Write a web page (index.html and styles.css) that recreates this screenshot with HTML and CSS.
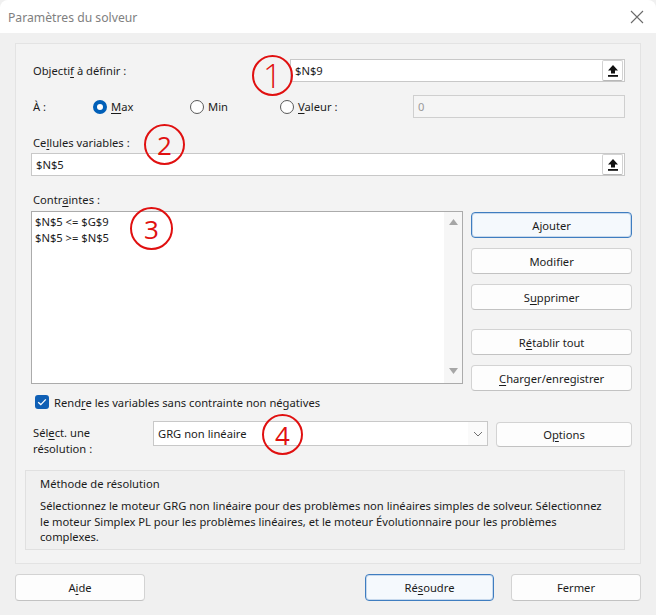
FILE: index.html
```html
<!DOCTYPE html>
<html lang="fr">
<head>
<meta charset="utf-8">
<title>Paramètres du solveur</title>
<link rel="stylesheet" href="styles.css">
</head>
<body>
<div class="window">
  <div class="titlebar">
    <span class="title">Paramètres du solveur</span>
    <svg class="close" width="14" height="14" viewBox="0 0 14 14"><path d="M1 1L13 13M13 1L1 13" stroke="#6b6b6b" stroke-width="1.1" fill="none"/></svg>
  </div>

  <div class="panel">
    <div class="row row-obj">
      <span class="lbl">Objecti<u>f</u> à définir :</span>
      <div class="field field-obj">
        <span class="val">$N$9</span>
        <span class="ref-btn"><svg width="12" height="13" viewBox="0 0 12 13"><path d="M6 1L11 6.5H8V9.5H4V6.5H1Z" fill="#111"/><rect x="1" y="11" width="10" height="1.8" fill="#111"/></svg></span>
      </div>
    </div>

    <div class="row row-radio">
      <span class="lbl lbl-a">À :</span>
      <span class="radio-grp g-max"><span class="radio on"></span><span><u>M</u>ax</span></span>
      <span class="radio-grp g-min"><span class="radio"></span><span>Min</span></span>
      <span class="radio-grp g-val"><span class="radio"></span><span><u>V</u>aleur :</span></span>
      <div class="field field-zero"><span class="val dis">0</span></div>
    </div>

    <div class="lbl lbl-block lbl-cells">Ce<u>l</u>lules variables :</div>
    <div class="field field-cells">
      <span class="val">$N$5</span>
      <span class="ref-btn"><svg width="12" height="13" viewBox="0 0 12 13"><path d="M6 1L11 6.5H8V9.5H4V6.5H1Z" fill="#111"/><rect x="1" y="11" width="10" height="1.8" fill="#111"/></svg></span>
    </div>

    <div class="lbl lbl-block lbl-cons">Contr<u>a</u>intes :</div>
    <div class="cons">
      <div class="listbox">
        <div class="items">
          <div class="item">$N$5 &lt;= $G$9</div>
          <div class="item">$N$5 &gt;= $N$5</div>
        </div>
        <div class="scroll">
          <svg width="9" height="6" viewBox="0 0 9 6"><path d="M4.5 0L9 6H0Z" fill="#a6a6a6"/></svg>
          <svg width="9" height="6" viewBox="0 0 9 6"><path d="M0 0H9L4.5 6Z" fill="#a6a6a6"/></svg>
        </div>
      </div>
      <div class="btn-col">
        <button class="btn default">Ajouter</button>
        <button class="btn">Modifier</button>
        <button class="btn">S<u>u</u>pprimer</button>
        <button class="btn gap">R<u>é</u>tablir tout</button>
        <button class="btn"><u>C</u>harger/enregistrer</button>
      </div>
    </div>

    <div class="check-row">
      <span class="checkbox"><svg width="10" height="8" viewBox="0 0 10 8"><path d="M1.2 4.2L3.8 6.6L8.8 1.4" stroke="#fff" stroke-width="1.3" fill="none"/></svg></span>
      <span>Rend<u>r</u>e les variables sans contrainte non négatives</span>
    </div>

    <div class="select-row">
      <div class="sel-lbl">Sél<u>e</u>ct. une<br>résolution :</div>
      <div class="select">
        <span class="val">GRG non linéaire</span>
        <span class="drop"><svg width="10" height="6" viewBox="0 0 10 6"><path d="M1 1L5 5L9 1" stroke="#707070" stroke-width="1" fill="none"/></svg></span>
      </div>
      <button class="btn btn-opt">O<u>p</u>tions</button>
    </div>

    <div class="method">
      <div class="method-title">Méthode de résolution</div>
      <p class="method-text">Sélectionnez le moteur GRG non linéaire pour des problèmes non linéaires simples de solveur. Sélectionnez le moteur Simplex PL pour les problèmes linéaires, et le moteur Évolutionnaire pour les problèmes complexes.</p>
    </div>

    <span class="mark m1">1</span>
    <span class="mark m2">2</span>
    <span class="mark m3">3</span>
    <span class="mark m4">4</span>
  </div>

  <div class="footer">
    <button class="btn fbtn">A<u>i</u>de</button>
    <span class="spacer"></span>
    <button class="btn fbtn default">Ré<u>s</u>oudre</button>
    <button class="btn fbtn">Fermer</button>
  </div>
</div>
</body>
</html>
```

FILE: styles.css
```css
* { box-sizing: border-box; }
html, body { margin: 0; padding: 0; background: #f0f0f0; }
body {
  font-family: "Noto Sans", "Open Sans", sans-serif;
  font-size: 11.2px;
  color: #1b1b1b;
}
u { text-decoration-thickness: 1px; text-underline-offset: 2px; }

.window {
  width: 656px;
  height: 615px;
  background: #f0f0f0;
  border-radius: 8px;
  overflow: hidden;
}

.titlebar {
  height: 33px;
  background: #fff;
  display: flex;
  align-items: center;
  padding: 0 12px 0 8px;
}
.title { font-size: 12.2px; color: #808080; flex: 1; padding-top: 1px; }
.close { display: block; }

.panel {
  position: relative;
  margin: 10px 15px 0 15px;
  height: 521px;
  border: 1px solid #e3e3e3;
  background: #f3f3f3;
  padding: 0 8px 0 15px;
}

.row { display: flex; align-items: center; height: 23px; }
.row-obj { margin-top: 15px; }
.row-radio { margin-top: 13px; }
.lbl { padding-left: 2px; }
.lbl-block { line-height: 16px; height: 16px; }
.lbl-cells { margin-top: 17px; }
.lbl-cons { margin-top: 16px; }

.field {
  height: 23px;
  border: 1px solid #c8c8c8;
  background: #fff;
  display: flex;
  align-items: center;
  padding-left: 4px;
  padding-right: 1px;
}
.val { flex: 1; }
.field-obj { margin-left: auto; width: 335px; margin-right: 7px; }
.field-cells { margin-top: 2px; width: 594px; }
.field-zero { width: 212px; background: #f5f5f5; border-color: #cfcfcf; margin-left: 0; }
.dis { color: #9a9a9a; }
.ref-btn {
  width: 21px;
  height: 21px;
  border: 1px solid #d2d2d2;
  border-bottom-color: #b8b8b8;
  border-radius: 2px;
  background: #fff;
  display: flex;
  align-items: center;
  justify-content: center;
}

.lbl-a { width: 62px; }
.radio-grp { display: flex; align-items: center; gap: 4px; }
.g-max { width: 97px; }
.g-min { width: 90px; }
.g-val { width: 133px; }
.radio {
  width: 14px; height: 14px;
  border-radius: 50%;
  border: 1px solid #5a5a5a;
  background: #fff;
}
.radio.on { border: 4px solid #005fb8; background: #fff; }

.cons { display: flex; align-items: flex-start; margin-top: 3px; height: 173px; }
.listbox {
  width: 433px;
  height: 173px;
  border: 1px solid #ababab;
  background: #fff;
  display: flex;
}
.items { flex: 1; padding: 2px 0 0 3px; }
.item { line-height: 16px; }
.scroll {
  width: 18px;
  background: #f6f6f6;
  display: flex;
  flex-direction: column;
  justify-content: space-between;
  align-items: center;
  padding: 7px 0 9px 0;
}
.scroll svg { display: block; }

.btn-col { margin-left: 8px; width: 161px; padding-top: 1px; display: flex; flex-direction: column; gap: 10px; }
.btn {
  font: inherit;
  color: #1b1b1b;
  height: 26px;
  border: 1px solid #d3d3d3;
  border-bottom-color: #c2c2c2;
  border-radius: 4px;
  background: #fdfdfd;
  padding: 0;
  display: flex;
  align-items: center;
  justify-content: center;
  flex-shrink: 0;
}
.btn.gap { margin-top: 9px; }
.btn.default { border: 1px solid #3f7dc0; background: #f5f9fd; box-shadow: inset 0 0 0 1px rgba(63,125,192,0.25); }

.check-row { display: flex; align-items: center; height: 14px; margin-top: 11px; padding-left: 4px; gap: 5px; }
.checkbox {
  width: 14px; height: 14px;
  border-radius: 3px;
  background: #0f5fb5;
  display: flex; align-items: center; justify-content: center;
}

.select-row { display: flex; align-items: flex-start; margin-top: 12px; }
.sel-lbl { width: 122px; padding-left: 2px; padding-top: 4px; line-height: 16px; }
.select {
  width: 335px; height: 25px;
  border: 1px solid #c8c8c8;
  background: #fff;
  display: flex; align-items: center;
  padding-left: 4px;
}
.drop { width: 19px; height: 23px; background: #fafafa; display: flex; align-items: center; justify-content: center; }
.btn-opt { width: 136px; height: 25px; margin-left: 8px; margin-top: 1px; }

.method {
  margin-top: 13px;
  margin-left: -6px;
  width: 600px;
  height: 80px;
  border: 1px solid #e0e0e0;
  background: #f0f0f0;
  padding: 5px 18px 0 14px;
}
.method-title { line-height: 16px; }
.method-text { margin: 6px 0 0 0; line-height: 15.5px; }

.mark {
  position: absolute;
  width: 41px; height: 41px;
  border: 2px solid #e01010;
  border-radius: 50%;
  display: flex; align-items: center; justify-content: center;
  color: #e01010;
  font-family: "Open Sans", sans-serif;
  font-weight: 400;
  font-size: 26px;
  line-height: 1;
}
.m1 { left: 236px; top: 11px; font-size: 33px; font-weight: 300; }
.m2 { left: 128px; top: 80px; }
.m3 { left: 114px; top: 163px; width: 43px; height: 43px; }
.m4 { left: 246px; top: 370px; }

.footer { display: flex; margin-top: 10px; padding: 0 15px; }
.fbtn { width: 130px; height: 27px; }
.fbtn.default { width: 129px; margin-right: 17px; }
.spacer { flex: 1; }
```
